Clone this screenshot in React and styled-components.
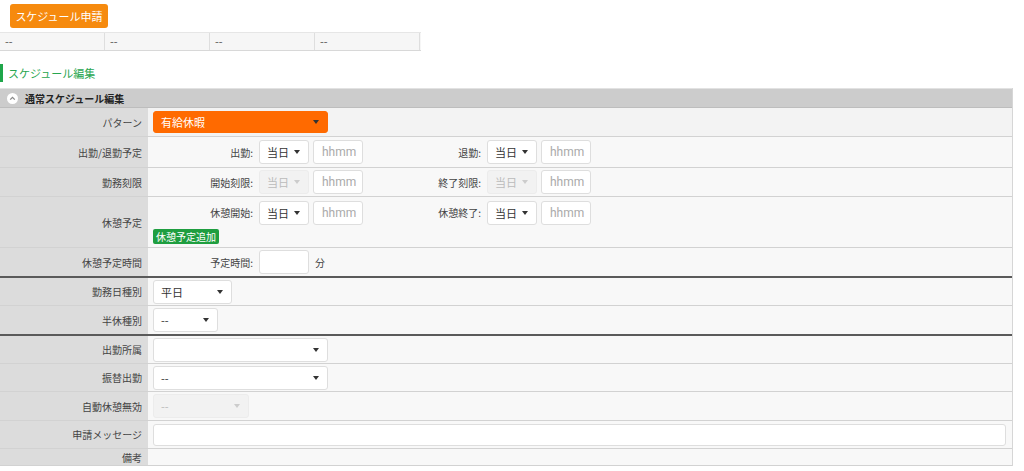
import React from 'react';
import styled, { createGlobalStyle } from 'styled-components';

const GlobalStyle = createGlobalStyle`
  body {
    margin: 0;
    background: #fff;
    font-family: "Noto Sans CJK JP", "Noto Sans", sans-serif;
    color: #333;
  }
`;

const Page = styled.div`
  width: 1024px;
  height: 471px;
  overflow: hidden;
`;

const TopBar = styled.div`
  display: flex;
  align-items: flex-start;
  padding: 4px 10px 0;
  height: 28px;
  box-sizing: border-box;
`;

const ApplyButton = styled.button`
  width: 98px;
  height: 24px;
  border: none;
  border-radius: 3px;
  background: #f68a0e;
  color: #fff;
  font-family: inherit;
  font-size: 11px;
  padding: 0;
`;

const SummaryRow = styled.div`
  display: grid;
  grid-template-columns: repeat(4, 105px);
  margin-top: 4px;
  height: 19px;
  border-top: 1px solid #e6e6e6;
  border-bottom: 1px solid #d8d8d8;
  box-sizing: border-box;
  width: 421px;
  background: #f6f6f6;
`;

const SummaryCell = styled.div`
  border-right: 1px solid #dedede;
  font-size: 11px;
  line-height: 17px;
  padding-left: 5px;
  color: #555;
`;

const EditTitle = styled.div`
  margin-top: 13px;
  height: 18px;
  border-left: 3px solid #1fa64a;
  padding-left: 5px;
  color: #27a64f;
  font-size: 11px;
  line-height: 18px;
`;

const Table = styled.div`
  margin-top: 6px;
  width: 1013px;
  border-right: 1px solid #d6d6d6;
  box-sizing: border-box;
`;

const SectionHead = styled.div`
  display: flex;
  align-items: center;
  gap: 7px;
  height: 20px;
  padding-left: 7px;
  background: #cccccc;
  border-top: 1px solid #e2e2e2;
  border-bottom: 1px solid #bdbdbd;
  box-sizing: border-box;
  font-size: 10px;
  font-weight: bold;
  color: #222;
`;

const Row = styled.div`
  display: grid;
  grid-template-columns: 148px 1fr;
  height: ${(p) => p.$h}px;
  border-bottom: ${(p) => (p.$strong ? '2px solid #5a5a5a' : '1px solid #d2d2d2')};
  box-sizing: border-box;
`;

const Label = styled.div`
  background: #dcdcdc;
  display: flex;
  align-items: center;
  justify-content: flex-end;
  padding-right: 6px;
  font-size: 10px;
  color: #444;
`;

const Value = styled.div`
  background: ${(p) => (p.$first ? '#f3f3f3' : '#f8f8f8')};
  padding-left: 5px;
  display: flex;
  flex-direction: ${(p) => (p.$col ? 'column' : 'row')};
  justify-content: ${(p) => (p.$col ? 'center' : 'flex-start')};
  align-items: ${(p) => (p.$col ? 'flex-start' : 'center')};
  gap: ${(p) => (p.$col ? '4px' : '0')};
`;

const Line = styled.div`
  display: flex;
  align-items: center;
`;

const Group = styled.div`
  display: flex;
  align-items: center;
  width: 228px;
`;

const FieldLabel = styled.span`
  width: 100px;
  text-align: right;
  margin-right: 6px;
  font-size: 10px;
  color: #444;
`;

const Select = styled.div`
  width: ${(p) => p.$w}px;
  height: ${(p) => p.$h || 24}px;
  box-sizing: border-box;
  border: 1px solid ${(p) => (p.$tone === 'orange' ? '#ff6a00' : p.$tone === 'off' ? '#ececec' : '#dedede')};
  border-radius: 3px;
  background: ${(p) => (p.$tone === 'orange' ? '#ff6a00' : p.$tone === 'off' ? '#f2f2f2' : '#fff')};
  color: ${(p) => (p.$tone === 'orange' ? '#fff' : p.$tone === 'off' ? '#bbb' : '#333')};
  display: flex;
  align-items: center;
  padding: 0 8px 0 7px;
  font-size: 11px;
  flex: none;
  &::after {
    content: '';
    margin-left: auto;
    border-left: 3px solid transparent;
    border-right: 3px solid transparent;
    border-top: 4px solid ${(p) => (p.$tone === 'off' ? '#ccc' : '#333')};
  }
`;

const TimeInput = styled.div`
  width: 50px;
  height: 24px;
  box-sizing: border-box;
  margin-left: 4px;
  border: 1px solid #dedede;
  border-radius: 3px;
  background: #fff;
  color: #aaa;
  font-family: Roboto, "Noto Sans", sans-serif;
  font-size: 12px;
  padding-left: 8px;
  display: flex;
  align-items: center;
`;

const TextInput = styled.div`
  width: ${(p) => p.$w}px;
  height: ${(p) => p.$h || 24}px;
  box-sizing: border-box;
  border: 1px solid #dedede;
  border-radius: 3px;
  background: #fff;
`;

const Unit = styled.span`
  font-size: 10px;
  margin-left: 6px;
  color: #444;
`;

const AddButton = styled.span`
  background: #1f9e40;
  color: #fff;
  font-size: 10px;
  line-height: 15px;
  padding: 0 3px;
  border-radius: 2px;
`;

function Chevron() {
  return (
    <svg width="11" height="11" viewBox="0 0 11 11">
      <circle cx="5.5" cy="5.5" r="5.5" fill="#fff" />
      <path d="M3.2 6.6 5.5 4.3 7.8 6.6" fill="none" stroke="#888" strokeWidth="1.3" />
    </svg>
  );
}

function TimePair({ label, off }) {
  return (
    <Group>
      <FieldLabel>{label}:</FieldLabel>
      <Select $w={50} $tone={off ? 'off' : ''}>当日</Select>
      <TimeInput>hhmm</TimeInput>
    </Group>
  );
}

export default function App() {
  return (
    <Page>
      <GlobalStyle />
      <TopBar>
        <ApplyButton>スケジュール申請</ApplyButton>
      </TopBar>
      <SummaryRow>
        {[0, 1, 2, 3].map((i) => (
          <SummaryCell key={i}>--</SummaryCell>
        ))}
      </SummaryRow>
      <EditTitle>スケジュール編集</EditTitle>
      <Table>
        <SectionHead>
          <Chevron />
          通常スケジュール編集
        </SectionHead>
        <Row $h={29}>
          <Label>パターン</Label>
          <Value $first>
            <Select $w={175} $h={22} $tone="orange">有給休暇</Select>
          </Value>
        </Row>
        <Row $h={31}>
          <Label>出勤/退勤予定</Label>
          <Value>
            <TimePair label="出勤" />
            <TimePair label="退勤" />
          </Value>
        </Row>
        <Row $h={29}>
          <Label>勤務刻限</Label>
          <Value>
            <TimePair label="開始刻限" off />
            <TimePair label="終了刻限" off />
          </Value>
        </Row>
        <Row $h={51}>
          <Label>休憩予定</Label>
          <Value $col>
            <Line>
              <TimePair label="休憩開始" />
              <TimePair label="休憩終了" />
            </Line>
            <AddButton>休憩予定追加</AddButton>
          </Value>
        </Row>
        <Row $h={30} $strong>
          <Label>休憩予定時間</Label>
          <Value>
            <FieldLabel>予定時間:</FieldLabel>
            <TextInput $w={50} />
            <Unit>分</Unit>
          </Value>
        </Row>
        <Row $h={28}>
          <Label>勤務日種別</Label>
          <Value>
            <Select $w={79}>平日</Select>
          </Value>
        </Row>
        <Row $h={30} $strong>
          <Label>半休種別</Label>
          <Value>
            <Select $w={65}>--</Select>
          </Value>
        </Row>
        <Row $h={28}>
          <Label>出勤所属</Label>
          <Value>
            <Select $w={175} />
          </Value>
        </Row>
        <Row $h={28}>
          <Label>振替出勤</Label>
          <Value>
            <Select $w={175}>--</Select>
          </Value>
        </Row>
        <Row $h={29}>
          <Label>自動休憩無効</Label>
          <Value>
            <Select $w={96} $tone="off">--</Select>
          </Value>
        </Row>
        <Row $h={28}>
          <Label>申請メッセージ</Label>
          <Value>
            <TextInput $w={853} $h={22} />
          </Value>
        </Row>
        <Row $h={17}>
          <Label>備考</Label>
          <Value />
        </Row>
      </Table>
    </Page>
  );
}
